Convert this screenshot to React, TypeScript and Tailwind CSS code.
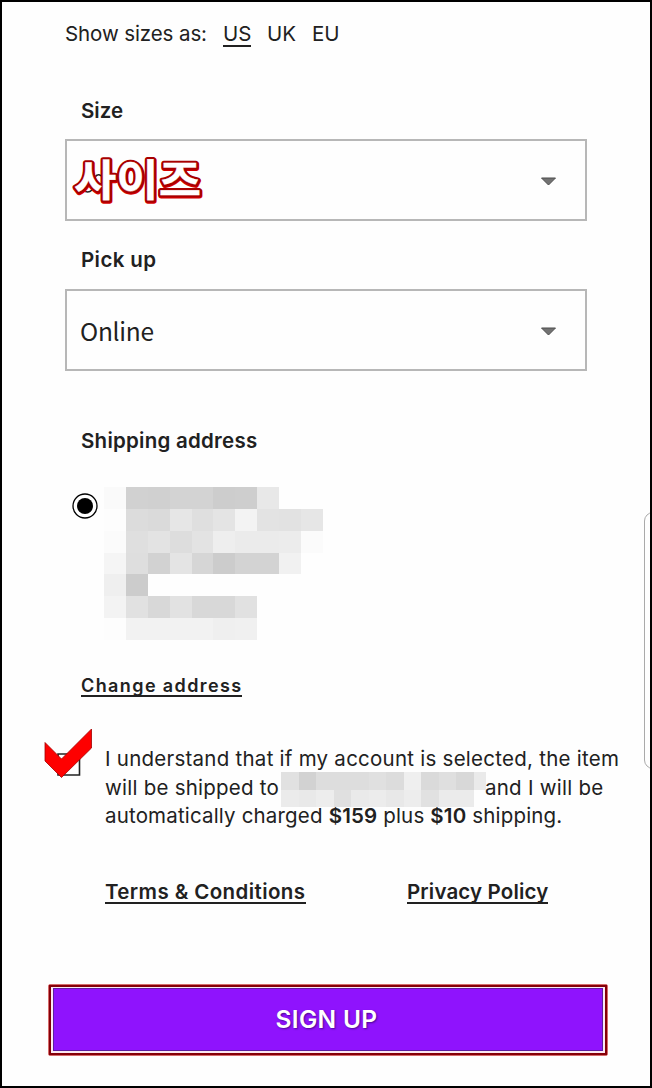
import React from "react";

const ADDRESS_MOSAIC: string[][] = [
  ["#fafafa", "#d1d1d1", "#d0d0d0", "#d3d3d3", "#d3d3d3", "#cdcdcd", "#cecece", "#e8e8e8", "", ""],
  ["#fdfdfd", "#dcdcdc", "#dadada", "#e6e6e6", "#dfdfdf", "#e4e4e4", "#f3f3f3", "#e3e3e3", "#e2e2e2", "#e6e6e6"],
  ["#fbfbfb", "#dfdfdf", "#e3e3e3", "#dddddd", "#e3e3e3", "#eeeeee", "#ebebeb", "#ebebeb", "#ececec", "#fbfbfb"],
  ["#f5f5f5", "#dedede", "#d2d2d2", "#e4e4e4", "#d6d6d6", "#cccccc", "#d3d3d3", "#d3d3d3", "#f1f1f1", ""],
  ["#efefef", "#cccccc", "", "", "", "", "", "", "", ""],
  ["#f3f3f3", "#e1e1e1", "#d8d8d8", "#e2e2e2", "#d8d8d8", "#d8d8d8", "#e1e1e1", "", "", ""],
  ["#fdfdfd", "#f2f2f2", "#f2f2f2", "#f2f2f2", "#f2f2f2", "#efefef", "#f0f0f0", "", "", ""],
];

const NAME_MOSAIC: string[][] = [
  ["#e1e1e1", "#d2d2d2", "#dddddd", "#dddddd", "#dddddd", "#e0e0e0", "#dcdcdc", "#efefef", "#dadada", "#dfdfdf", "#d8d8d8", "#eaeaea"],
  ["#ebebeb", "#e9e9e9", "#ededed", "#e0e0e0", "#eaeaea", "#ececec", "#e8e8e8", "#ededed", "#e1e1e1", "#ebebeb", "#ebebeb", ""],
];

function Mosaic({ rows, className }: { rows: string[][]; className: string }) {
  return (
    <div className={className} aria-hidden="true">
      {rows.flat().map((c, i) => (
        <span key={i} style={{ background: c || undefined }} />
      ))}
    </div>
  );
}

function SelectBox({ children }: { children: React.ReactNode }) {
  return (
    <div className="flex h-[82px] w-[522px] items-center justify-between border-2 border-[#b7b7b7] pl-[13px] pr-[28px] pt-[2px]">
      {children}
      <svg width="17" height="9" viewBox="0 0 17 9" className="shrink-0">
        <path d="M1.500 1h14L8.500 8z" fill="#727272" stroke="#4d4d4d" strokeWidth="1" />
      </svg>
    </div>
  );
}

export default function App() {
  return (
    <main className="relative flex h-[1088px] w-[652px] flex-col overflow-hidden border-2 border-black bg-[#fefefe] font-['Inter',sans-serif] text-[#212121]">
      <div className="flex h-[64px] shrink-0 items-center pl-[63px] text-[20.5px] leading-[28px]">
        <span className="w-[158px] whitespace-nowrap tracking-[-0.1px]">Show sizes as:</span>
        <span className="h-[25px] w-[28px] border-b-2 border-[#212121] leading-[24px]">US</span>
        <span className="ml-[16px] w-[45px]">UK</span>
        <span>EU</span>
      </div>

      <form className="flex flex-col pl-[63px]">
        <label className="mt-[31px] h-[28px] pl-[16px] text-[20.5px] font-semibold leading-[28px]">Size</label>
        <div className="mt-[14px]">
          <SelectBox>
            <svg width="140" height="56" viewBox="0 0 140 56" className="-ml-[10px] overflow-visible">
              <g fontFamily="Noto Sans CJK KR, sans-serif" fontWeight="700" fontSize="43">
                <path d="M25 26a3.500 3.500 0 0 1 6-3M13 37q5 4 9 0" fill="none" stroke="#222" strokeWidth="1.5" />
                <text x="4.500" y="43.500" textLength="127" lengthAdjust="spacingAndGlyphs" fill="#d80000" stroke="#d80000" strokeWidth="5" strokeLinejoin="round">사이즈</text>
                <text x="4" y="42.500" textLength="127" lengthAdjust="spacingAndGlyphs" fill="#a80000" stroke="#a80000" strokeWidth="4.500" strokeLinejoin="round">사이즈</text>
                <text x="4" y="42.500" textLength="127" lengthAdjust="spacingAndGlyphs" fill="#fff" stroke="#fff" strokeWidth=".3">사이즈</text>
              </g>
            </svg>
          </SelectBox>
        </div>

        <label className="mt-[25px] h-[28px] pl-[16px] text-[20.5px] font-semibold leading-[28px] tracking-[0.4px]">Pick up</label>
        <div className="mt-[15px]">
          <SelectBox>
            <span className="font-['Noto_Sans_CJK_KR',sans-serif] text-[24.500px] leading-[32px] tracking-[-0.250px]">Online</span>
          </SelectBox>
        </div>

        <h2 className="mt-[56px] h-[28px] pl-[16px] text-[20.5px] font-semibold leading-[28px] tracking-[0.25px]">Shipping address</h2>
        <div className="mt-[32px] flex h-[153px] pl-[7px]">
          <svg width="26" height="26" viewBox="0 0 26 26" className="mt-[6px] shrink-0">
            <circle cx="13" cy="13" r="12" fill="#fff" stroke="#000" strokeWidth="1.3" />
            <circle cx="13" cy="13" r="8" fill="#000" />
          </svg>
          <Mosaic rows={ADDRESS_MOSAIC} className="ml-[6px] grid h-[153px] w-[219px] grid-cols-10 grid-rows-7" />
        </div>

        <a className="ml-[16px] mt-[35px] h-[22px] w-[161px] whitespace-nowrap border-b-2 border-[#212121] text-[18px] font-semibold leading-[22px] tracking-[1.4px]">
          Change address
        </a>
      </form>

      <div className="mt-[32px] flex h-[102px] shrink-0 pl-[42px]">
        <svg width="50" height="51" viewBox="0 0 50 51" className="shrink-0">
          <path d="M14 25h21.500v21H14z" fill="#fff" stroke="#222" strokeWidth="1.6" />
          <path d="M1 13.5 17.500 30 47.500 0V19L17.500 48.500 1 32z" fill="#fe0000" stroke="#a30000" strokeWidth=".8" />
        </svg>
        <div className="relative ml-[11px] mt-[16px] flex flex-col whitespace-nowrap text-[20.5px] leading-[28.500px]">
          <p className="tracking-[0.25px]">I understand that if my account is selected, the item</p>
          <p className="flex">
            <span className="w-[380px] tracking-[0.24px]">will be shipped to</span>
            <span className="tracking-[0.25px]">and I will be</span>
          </p>
          <p className="tracking-[0.17px]">
            automatically charged <b className="font-semibold">$159</b> plus <b className="font-semibold">$10</b> shipping.
          </p>
          <Mosaic rows={NAME_MOSAIC} className="absolute left-[176px] top-[27px] grid h-[35px] w-[205px] grid-cols-[repeat(11,17.5px)_12px] grid-rows-2" />
        </div>
      </div>

      <nav className="mt-[45px] flex h-[28px] shrink-0 whitespace-nowrap pl-[103px] text-[20.5px] font-semibold leading-[32px]">
        <a className="h-[28px] w-[201px] border-b-2 border-[#212121] tracking-[0.4px]">Terms &amp; Conditions</a>
        <a className="ml-[101px] h-[28px] w-[141px] border-b-2 border-[#212121] tracking-[0.15px]">Privacy Policy</a>
      </nav>

      <div className="ml-[46px] mt-[80px] h-[72px] w-[560px] shrink-0 rounded-[2px] border border-[#d66b6b] bg-[#fbe8f4]">
        <div className="h-full w-full border-2 border-[#850008] p-[2px] pt-[1px]">
          <button className="flex h-full w-full items-center justify-center border border-[#5d1ea0] bg-[#8f13fd] pr-[3px] text-[24.500px] font-semibold tracking-[0.3px] text-white [text-shadow:1px_1px_2px_#4b0a91]">
            SIGN UP
          </button>
        </div>
      </div>

      <div className="absolute -right-[12px] top-[510px] h-[257px] w-[18px] rounded-[12px] border border-[#aaa]" />
    </main>
  );
}
